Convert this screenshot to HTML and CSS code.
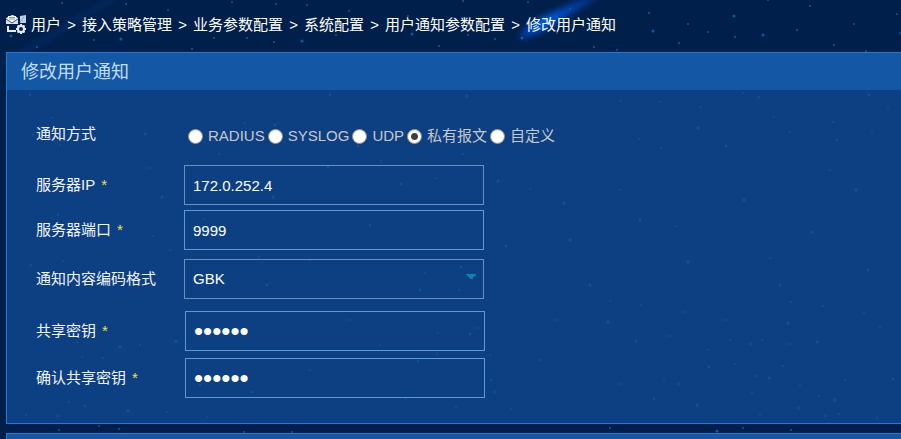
FILE: index.html
```
<!DOCTYPE html>
<html lang="zh-CN">
<head>
    <meta charset="UTF-8">
    <meta name="viewport" content="width=device-width, initial-scale=1.0">
    <title>修改用户通知</title>
    <link rel="stylesheet" href="styles.css">
</head>
<body>
    <svg class="sky" viewBox="0 0 901 439" preserveAspectRatio="xMinYMin slice" aria-hidden="true">
        <defs>
            <linearGradient id="comet" gradientUnits="userSpaceOnUse" x1="520" y1="36" x2="600" y2="-4">
                <stop offset="0" stop-color="#0048c8" stop-opacity="0.6"/>
                <stop offset="0.3" stop-color="#0060f0" stop-opacity="1"/>
                <stop offset="1" stop-color="#0048c8" stop-opacity="0.5"/>
            </linearGradient>
            <filter id="soft" x="-30%" y="-30%" width="160%" height="160%">
                <feGaussianBlur stdDeviation="3"/>
            </filter>
        </defs>
        <path d="M518 39 Q520 28 545 16 L595 -6 L597 -2 L555 23 Q532 38 518 39Z" fill="url(#comet)" filter="url(#soft)"/>
        <path d="M0 66 L118 -4" stroke="#0a4fb0" stroke-width="4" opacity="0.3" filter="url(#soft)"/>
        <g fill="none" stroke="#0d6fbd" stroke-width="3" stroke-linecap="round" opacity="0.75">
            <path d="M121 39h0M412 34h0M522 38h0M734 16h0M653 31h0M763 35h0M901 33h0M11 36h0M302 41h0"/>
            <path d="M145 134h0M275 125h0M358 146h0M162 197h0M273 197h0M328 167h0M401 184h0M564 203h0M498 181h0M461 267h0M420 290h0M470 334h0M418 361h0M491 380h0M406 398h0M506 246h0"/>
            <path d="M698 128h0M726 146h0M837 140h0M759 97h0M869 95h0M31 265h0M267 285h0M120 347h0M176 341h0M252 392h0M85 406h0M128 411h0M200 385h0"/>
            <path d="M608 322h0M636 341h0M709 367h0M788 323h0M817 342h0M769 378h0M835 400h0M654 399h0M697 405h0M893 379h0M717 431h0M30 95h0M330 95h0M467 96h0"/>
            <path d="M570 240h0M640 220h0M688 262h0M744 200h0M812 232h0M868 270h0M590 285h0M856 190h0M780 285h0M120 225h0M58 215h0M370 225h0M310 260h0"/>
        </g>
        <g fill="none" stroke="#0b5ca6" stroke-width="2" stroke-linecap="square" opacity="0.75">
            <path d="M62 3h0M126 4h0M94 40h0M37 47h0M192 49h0M168 10h0M214 38h0M247 38h0M274 42h0M276 4h0M232 2h0M307 5h0M349 11h0M336 35h0M408 16h0M439 46h0M463 1h0M468 35h0M495 39h0M528 2h0M570 9h0M557 33h0M594 47h0M617 50h0"/>
            <path d="M649 13h0M688 24h0M708 32h0M735 37h0M679 43h0M797 30h0M810 6h0M854 24h0M834 45h0M897 14h0M866 51h0M768 0h0M621 101h0M660 102h0M701 107h0M743 93h0M774 117h0M790 132h0M872 133h0M888 107h0M833 122h0M639 139h0M661 148h0"/>
            <path d="M33 135h0M52 118h0M219 154h0M245 123h0M150 168h0M204 219h0M153 236h0M60 145h0M104 183h0M77 342h0M82 357h0M140 345h0M170 250h0M259 257h0M63 261h0M103 358h0M69 402h0M58 416h0M167 412h0M26 415h0M207 417h0"/>
            <path d="M610 301h0M641 305h0M683 312h0M726 320h0M791 302h0M823 306h0M864 313h0M880 327h0M670 336h0M730 340h0M751 344h0M762 340h0M790 344h0M708 350h0M735 364h0M783 366h0M664 379h0M679 384h0M619 384h0M756 376h0M800 386h0M845 380h0M752 393h0M799 408h0M819 396h0M760 414h0M839 414h0M825 416h0M877 418h0"/>
            <path d="M59 430h0M119 429h0M99 426h0M244 432h0M292 432h0M610 428h0M743 428h0M791 430h0M381 161h0M436 178h0M530 189h0M518 130h0M463 154h0M425 273h0M459 290h0M438 333h0M478 328h0M490 355h0M437 354h0M495 392h0M511 409h0M456 407h0M620 190h0M676 226h0M720 240h0M770 258h0M830 170h0M880 216h0M555 320h0M540 360h0M350 320h0M310 370h0M380 345h0"/>
        </g>
    </svg>

    <nav class="breadcrumb">
        <svg class="breadcrumb-icon" viewBox="0 0 20 20" aria-hidden="true">
            <path d="M0 3L6 0h1L12 3v6H0z" fill="#dce4f0"/>
            <path d="M2 1h8v3L6 7 2 4z" fill="#fff"/>
            <path d="M3 2.500h6M3 4h6" stroke="#8695b4" stroke-width="1"/>
            <path d="M0 4l6 4 6-4" fill="none" stroke="#42557f" stroke-width="1"/>
            <path d="M14 1l6-1v8h-6z" fill="#c3cee0"/>
            <path d="M14 7l4-5" stroke="#8fa0bd" stroke-width="1"/>
            <path d="M2 11v5h8" fill="none" stroke="#e8eef8" stroke-width="2"/>
            <circle cx="15" cy="14" r="3" fill="none" stroke="#e8eef8" stroke-width="2"/>
            <path d="M15 9v2M15 17v2M10 14h2M18 14h2M11.500 10.500l1.500 1.500M17 16l1.500 1.500M18.500 10.500L17 12M13 16l-1.500 1.500" stroke="#e8eef8" stroke-width="2"/>
        </svg>
        <a href="#">用户</a><span class="sep">&gt;</span>
        <a href="#">接入策略管理</a><span class="sep">&gt;</span>
        <a href="#">业务参数配置</a><span class="sep">&gt;</span>
        <a href="#">系统配置</a><span class="sep">&gt;</span>
        <a href="#">用户通知参数配置</a><span class="sep">&gt;</span>
        <span>修改用户通知</span>
    </nav>

    <main>
        <form class="panel">
            <h1 class="panel-title">修改用户通知</h1>
            <div class="panel-body">
                <div class="row" role="radiogroup" aria-labelledby="typeLabel">
                    <span class="label" id="typeLabel">通知方式</span>
                    <div class="radios">
                        <input type="radio" name="type" id="radius"><label for="radius">RADIUS</label>
                        <input type="radio" name="type" id="syslog"><label for="syslog">SYSLOG</label>
                        <input type="radio" name="type" id="udp"><label for="udp">UDP</label>
                        <input type="radio" name="type" id="private" checked><label for="private">私有报文</label>
                        <input type="radio" name="type" id="custom"><label for="custom">自定义</label>
                    </div>
                </div>
                <div class="row">
                    <label class="label" for="serverIp">服务器IP<span class="required">*</span></label>
                    <input class="field field-plain" type="text" id="serverIp" value="172.0.252.4">
                </div>
                <div class="row">
                    <label class="label" for="serverPort">服务器端口<span class="required">*</span></label>
                    <input class="field" type="text" id="serverPort" value="9999">
                </div>
                <div class="row row-select">
                    <label class="label" for="encoding">通知内容编码格式</label>
                    <select class="field field-plain" id="encoding">
                        <option>GBK</option>
                        <option>UTF-8</option>
                    </select>
                </div>
                <div class="row row-secret">
                    <label class="label" for="secret">共享密钥<span class="required">*</span></label>
                    <input class="field" type="password" id="secret" value="123456">
                </div>
                <div class="row row-secret">
                    <label class="label" for="secret2">确认共享密钥<span class="required">*</span></label>
                    <input class="field" type="password" id="secret2" value="123456">
                </div>
            </div>
        </form>
        <section class="panel panel-next"></section>
    </main>
</body>
</html>
```
FILE: styles.css
```
* {
    box-sizing: border-box;
}
body {
    display: flex;
    flex-direction: column;
    margin: 0;
    min-height: 100vh;
    background-color: #001f4a;
    color: white;
    font: 15px/20px "Liberation Sans", "Noto Sans CJK SC", sans-serif;
}
.sky {
    position: absolute;
    top: 0;
    left: 0;
    width: 100%;
    height: 100%;
    z-index: -1;
}
.breadcrumb {
    display: flex;
    align-items: center;
    height: 52px;
    padding: 0 6px 2px;
    white-space: nowrap;
}
.breadcrumb a {
    color: white;
    text-decoration: none;
}
.breadcrumb-icon {
    width: 20px;
    height: 20px;
    margin-right: 5px;
}
.sep {
    width: 21px;
    text-align: center;
}
main {
    display: flex;
    flex: 1;
    flex-direction: column;
    padding-left: 6px;
}
.panel {
    border: 1px solid #2878d8;
    border-right: none;
    background-color: rgba(19, 77, 155, 0.7);
}
.panel-next {
    flex: 1;
    margin-top: 9px;
    border-bottom: none;
    background-color: #1458a5;
}
.panel-title {
    margin: 0;
    padding: 2px 14px 0;
    background-color: #1458a5;
    color: #c5def5;
    font-size: 18px;
    font-weight: 400;
    line-height: 35px;
}
.panel-body {
    padding: 24px 29px 25px;
}
.row {
    display: flex;
    align-items: center;
    min-height: 40px;
    margin-bottom: 5px;
}
.row:first-child {
    margin-bottom: 11px;
}
.row-select {
    margin: 9px 0 12px;
}
.row-secret {
    margin-bottom: 7px;
}
.row-secret:last-child {
    margin-bottom: 0;
}
.label {
    width: 148px;
    color: #f2f6fc;
}
.required {
    margin-left: 6px;
    color: #f0e442;
}
.radios {
    display: flex;
    align-items: center;
    padding: 4px 0 0 1px;
    color: #c8c8c8;
}
.radios input {
    appearance: none;
    width: 15px;
    height: 15px;
    margin: 0 5px 0 3px;
    border: 1px solid #909090;
    border-radius: 50%;
    background-color: white;
}
.radios input:checked {
    background-image: radial-gradient(circle, #404040 3px, transparent 4px);
}
.field {
    width: 300px;
    height: 40px;
    padding: 0 8px;
    border: 1px solid #5a9bd5;
    border-radius: 0;
    background-color: transparent;
    color: white;
    font: inherit;
}
.field-plain {
    border-color: #6c8fbd;
}
select.field {
    appearance: none;
    background-image: linear-gradient(to bottom left, #0d84a8 50%, transparent 50%), linear-gradient(to bottom right, #0d84a8 50%, transparent 50%);
    background-position: right 12px top 14px, right 6px top 14px;
    background-size: 6px 6px;
    background-repeat: no-repeat;
}
select.field option {
    background-color: #0d3f83;
}
.row-secret .field {
    margin-left: 1px;
    font-size: 26px;
}
```
